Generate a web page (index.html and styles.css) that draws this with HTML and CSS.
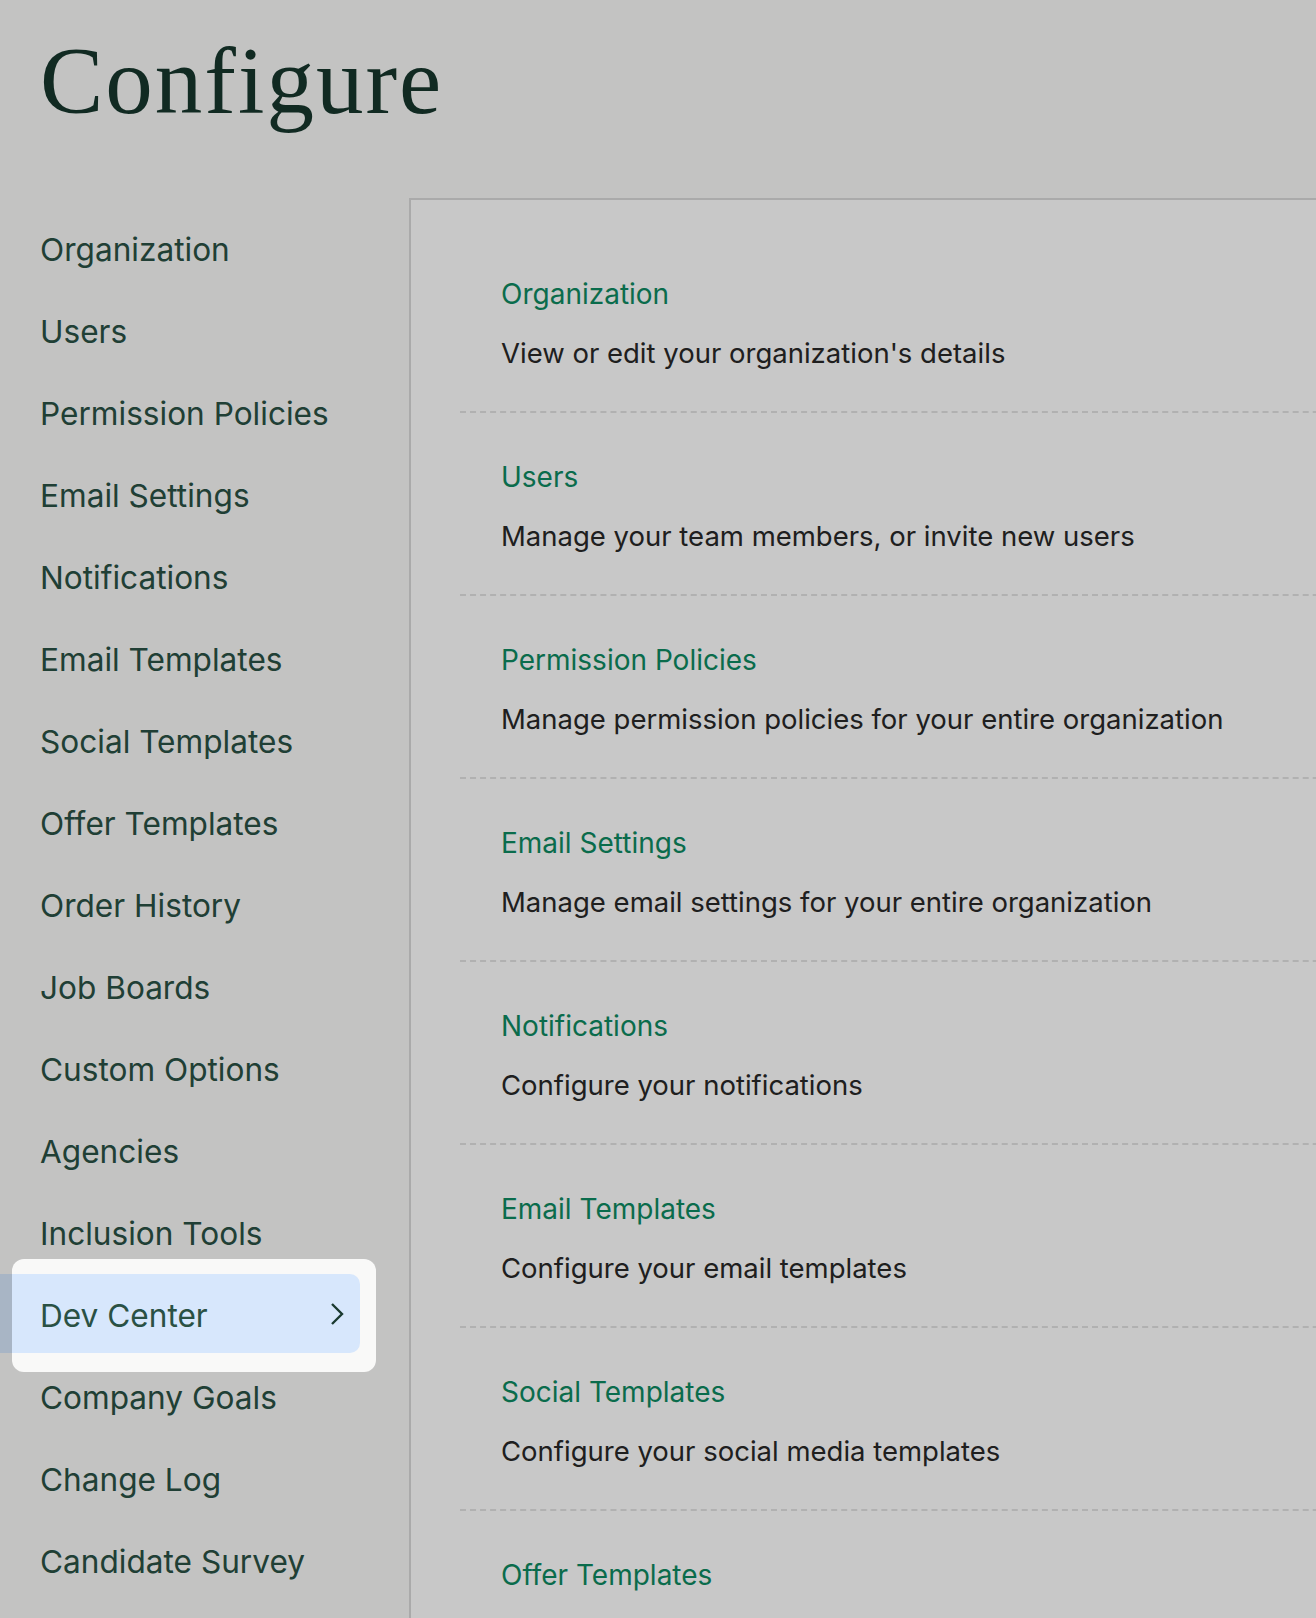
FILE: index.html
```html
<!DOCTYPE html>
<html lang="en">

<head>
    <meta charset="UTF-8">
    <meta name="viewport" content="width=device-width, initial-scale=1.0">
    <title>Configure</title>
    <link rel="stylesheet" href="styles.css">
</head>

<body>
    <main class="page">
        <h1 class="title">Configure</h1>

        <div class="layout">
            <!-- Sidebar -->
            <nav class="sidebar">
                <a href="#" class="nav-item">Organization</a>
                <a href="#" class="nav-item">Users</a>
                <a href="#" class="nav-item">Permission Policies</a>
                <a href="#" class="nav-item">Email Settings</a>
                <a href="#" class="nav-item">Notifications</a>
                <a href="#" class="nav-item">Email Templates</a>
                <a href="#" class="nav-item">Social Templates</a>
                <a href="#" class="nav-item">Offer Templates</a>
                <a href="#" class="nav-item">Order History</a>
                <a href="#" class="nav-item">Job Boards</a>
                <a href="#" class="nav-item">Custom Options</a>
                <a href="#" class="nav-item">Agencies</a>
                <a href="#" class="nav-item">Inclusion Tools</a>
                <a href="#" class="nav-item active">
                    Dev Center
                    <svg class="chevron" viewBox="0 0 14 24" width="14" height="24" aria-hidden="true">
                        <path d="M2 2l10 10L2 22" fill="none" stroke="currentColor" stroke-width="2.4" />
                    </svg>
                </a>
                <a href="#" class="nav-item">Company Goals</a>
                <a href="#" class="nav-item">Change Log</a>
                <a href="#" class="nav-item">Candidate Survey</a>
            </nav>

            <!-- Content -->
            <section class="panel">
                <ul class="settings-list">
                    <li class="setting">
                        <a href="#" class="setting-name">Organization</a>
                        <p class="setting-desc">View or edit your organization's details</p>
                    </li>
                    <li class="setting">
                        <a href="#" class="setting-name">Users</a>
                        <p class="setting-desc">Manage your team members, or invite new users</p>
                    </li>
                    <li class="setting">
                        <a href="#" class="setting-name">Permission Policies</a>
                        <p class="setting-desc">Manage permission policies for your entire organization</p>
                    </li>
                    <li class="setting">
                        <a href="#" class="setting-name">Email Settings</a>
                        <p class="setting-desc">Manage email settings for your entire organization</p>
                    </li>
                    <li class="setting">
                        <a href="#" class="setting-name">Notifications</a>
                        <p class="setting-desc">Configure your notifications</p>
                    </li>
                    <li class="setting">
                        <a href="#" class="setting-name">Email Templates</a>
                        <p class="setting-desc">Configure your email templates</p>
                    </li>
                    <li class="setting">
                        <a href="#" class="setting-name">Social Templates</a>
                        <p class="setting-desc">Configure your social media templates</p>
                    </li>
                    <li class="setting">
                        <a href="#" class="setting-name">Offer Templates</a>
                        <p class="setting-desc">Configure your offer templates</p>
                    </li>
                    <li class="setting">
                        <a href="#" class="setting-name">Order History</a>
                        <p class="setting-desc">View your order history</p>
                    </li>
                </ul>
            </section>
        </div>
    </main>
</body>

</html>
```

FILE: styles.css
```css
/* Reset */
* {
    margin: 0;
    padding: 0;
    box-sizing: border-box;
}

:root {
    --bg: #f9f9f8;
    --panel-bg: #fff;
    --panel-border: #d9d9d9;
    --title: #16362c;
    --nav-text: #2a5144;
    --nav-active: #d7e7fc;
    --link: #0e8a62;
    --text: #282828;
    --dash: #e2e2e2;
    --dim: rgba(0, 0, 0, 0.217);
}

html,
body {
    overflow: hidden;
}

body {
    background-color: var(--bg);
    font-family: 'Inter', 'Liberation Sans', sans-serif;
}

.title {
    margin-top: 34px;
    padding-left: 40px;
    font-family: 'Liberation Serif', serif;
    font-size: 95px;
    font-weight: 400;
    line-height: 1;
    letter-spacing: 2px;
    color: var(--title);
}

.layout {
    display: flex;
    align-items: flex-start;
    margin-top: 69px;
}

/* Sidebar */
.sidebar {
    flex: 0 0 409px;
    padding-top: 10px;
    display: flex;
    flex-direction: column;
    gap: 3px;
}

.nav-item {
    display: flex;
    align-items: center;
    justify-content: space-between;
    width: 360px;
    height: 79px;
    padding: 5px 16px 0 40px;
    font-size: 31.6px;
    line-height: 74px;
    color: var(--nav-text);
    text-decoration: none;
}

.nav-item.active {
    position: relative;
    background-color: var(--nav-active);
    border-radius: 0 10px 10px 0;
}

/* spotlight over the active item, dims the rest of the page */
.nav-item.active::after {
    content: '';
    position: absolute;
    top: -15px;
    right: -16px;
    bottom: -19px;
    left: 12px;
    border-radius: 12px;
    box-shadow: 0 0 0 4000px var(--dim);
    pointer-events: none;
    z-index: 10;
}

.chevron {
    color: #1a3a30;
    margin-top: -4px;
}

/* Content */
.panel {
    flex: 0 0 1000px;
    background-color: var(--panel-bg);
    border-top: 2px solid var(--panel-border);
    border-left: 2px solid var(--panel-border);
    padding-top: 30px;
    padding-left: 49px;
    min-height: 1500px;
}

.settings-list {
    list-style: none;
}

.setting {
    padding: 46px 0 40px 41px;
    border-bottom: 2px dashed var(--dash);
}

.setting-name {
    display: block;
    font-size: 28px;
    line-height: 36px;
    color: var(--link);
    text-decoration: none;
}

.setting-desc {
    margin-top: 23px;
    font-size: 27.5px;
    line-height: 36px;
    color: var(--text);
}
```
